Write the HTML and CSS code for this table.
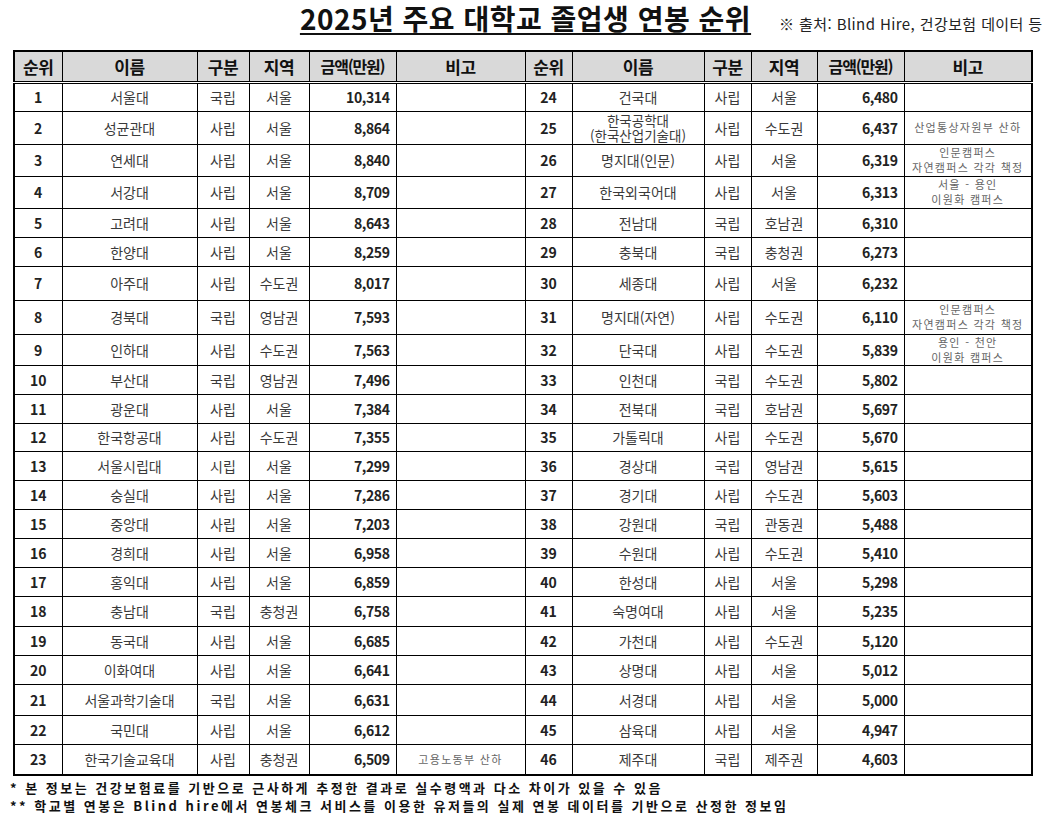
FILE: index.html
```html
<!DOCTYPE html>
<html lang="ko">
<head>
<meta charset="utf-8">
<title>2025년 주요 대학교 졸업생 연봉 순위</title>
<link rel="stylesheet" href="styles.css">
</head>
<body>
<div class="page">
  <header class="head">
    <div class="spacer"></div>
    <h1 class="title">2025년 주요 대학교 졸업생 연봉 순위</h1>
    <div class="source">※ 출처: Blind Hire, 건강보험 데이터 등</div>
  </header>

  <table class="rank-table">
    <colgroup>
      <col class="c-rank-l"><col class="c-name-l"><col class="c-type-l"><col class="c-reg-l"><col class="c-amt-l"><col class="c-note-l">
      <col class="c-rank-r"><col class="c-name-r"><col class="c-type-r"><col class="c-reg-r"><col class="c-amt-r"><col class="c-note-r">
    </colgroup>
    <thead>
      <tr>
        <th>순위</th><th>이름</th><th>구분</th><th>지역</th><th class="th-amt">금액(만원)</th><th>비고</th>
        <th>순위</th><th>이름</th><th>구분</th><th>지역</th><th class="th-amt">금액(만원)</th><th>비고</th>
      </tr>
    </thead>
    <tbody>
      <tr class="h29"><td class="rank">1</td><td>서울대</td><td>국립</td><td>서울</td><td class="amt">10,314</td><td class="note"></td>
        <td class="rank">24</td><td>건국대</td><td>사립</td><td>서울</td><td class="amt">6,480</td><td class="note"></td></tr>
      <tr class="h33"><td class="rank">2</td><td>성균관대</td><td>사립</td><td>서울</td><td class="amt">8,864</td><td class="note"></td>
        <td class="rank">25</td><td class="name2"><span class="ln">한국공학대</span><span class="ln">(한국산업기술대)</span></td><td>사립</td><td>수도권</td><td class="amt">6,437</td><td class="note">산업통상자원부 산하</td></tr>
      <tr class="h32"><td class="rank">3</td><td>연세대</td><td>사립</td><td>서울</td><td class="amt">8,840</td><td class="note"></td>
        <td class="rank">26</td><td>명지대(인문)</td><td>사립</td><td>서울</td><td class="amt">6,319</td><td class="note">인문캠퍼스<br>자연캠퍼스 각각 책정</td></tr>
      <tr class="h32"><td class="rank">4</td><td>서강대</td><td>사립</td><td>서울</td><td class="amt">8,709</td><td class="note"></td>
        <td class="rank">27</td><td>한국외국어대</td><td>사립</td><td>서울</td><td class="amt">6,313</td><td class="note">서울 - 용인<br>이원화 캠퍼스</td></tr>
      <tr class="h29"><td class="rank">5</td><td>고려대</td><td>사립</td><td>서울</td><td class="amt">8,643</td><td class="note"></td>
        <td class="rank">28</td><td>전남대</td><td>국립</td><td>호남권</td><td class="amt">6,310</td><td class="note"></td></tr>
      <tr class="h29"><td class="rank">6</td><td>한양대</td><td>사립</td><td>서울</td><td class="amt">8,259</td><td class="note"></td>
        <td class="rank">29</td><td>충북대</td><td>국립</td><td>충청권</td><td class="amt">6,273</td><td class="note"></td></tr>
      <tr class="h34"><td class="rank">7</td><td>아주대</td><td>사립</td><td>수도권</td><td class="amt">8,017</td><td class="note"></td>
        <td class="rank">30</td><td>세종대</td><td>사립</td><td>서울</td><td class="amt">6,232</td><td class="note"></td></tr>
      <tr class="h34"><td class="rank">8</td><td>경북대</td><td>국립</td><td>영남권</td><td class="amt">7,593</td><td class="note"></td>
        <td class="rank">31</td><td>명지대(자연)</td><td>사립</td><td>수도권</td><td class="amt">6,110</td><td class="note">인문캠퍼스<br>자연캠퍼스 각각 책정</td></tr>
      <tr class="h30"><td class="rank">9</td><td>인하대</td><td>사립</td><td>수도권</td><td class="amt">7,563</td><td class="note"></td>
        <td class="rank">32</td><td>단국대</td><td>사립</td><td>수도권</td><td class="amt">5,839</td><td class="note">용인 - 천안<br>이원화 캠퍼스</td></tr>
      <tr class="h29"><td class="rank">10</td><td>부산대</td><td>국립</td><td>영남권</td><td class="amt">7,496</td><td class="note"></td>
        <td class="rank">33</td><td>인천대</td><td>국립</td><td>수도권</td><td class="amt">5,802</td><td class="note"></td></tr>
      <tr class="h29"><td class="rank">11</td><td>광운대</td><td>사립</td><td>서울</td><td class="amt">7,384</td><td class="note"></td>
        <td class="rank">34</td><td>전북대</td><td>국립</td><td>호남권</td><td class="amt">5,697</td><td class="note"></td></tr>
      <tr class="h28"><td class="rank">12</td><td>한국항공대</td><td>사립</td><td>수도권</td><td class="amt">7,355</td><td class="note"></td>
        <td class="rank">35</td><td>가톨릭대</td><td>사립</td><td>수도권</td><td class="amt">5,670</td><td class="note"></td></tr>
      <tr class="h29"><td class="rank">13</td><td>서울시립대</td><td>시립</td><td>서울</td><td class="amt">7,299</td><td class="note"></td>
        <td class="rank">36</td><td>경상대</td><td>국립</td><td>영남권</td><td class="amt">5,615</td><td class="note"></td></tr>
      <tr class="h29"><td class="rank">14</td><td>숭실대</td><td>사립</td><td>서울</td><td class="amt">7,286</td><td class="note"></td>
        <td class="rank">37</td><td>경기대</td><td>사립</td><td>수도권</td><td class="amt">5,603</td><td class="note"></td></tr>
      <tr class="h29"><td class="rank">15</td><td>중앙대</td><td>사립</td><td>서울</td><td class="amt">7,203</td><td class="note"></td>
        <td class="rank">38</td><td>강원대</td><td>국립</td><td>관동권</td><td class="amt">5,488</td><td class="note"></td></tr>
      <tr class="h29"><td class="rank">16</td><td>경희대</td><td>사립</td><td>서울</td><td class="amt">6,958</td><td class="note"></td>
        <td class="rank">39</td><td>수원대</td><td>사립</td><td>수도권</td><td class="amt">5,410</td><td class="note"></td></tr>
      <tr class="h29"><td class="rank">17</td><td>홍익대</td><td>사립</td><td>서울</td><td class="amt">6,859</td><td class="note"></td>
        <td class="rank">40</td><td>한성대</td><td>사립</td><td>서울</td><td class="amt">5,298</td><td class="note"></td></tr>
      <tr class="h30"><td class="rank">18</td><td>충남대</td><td>국립</td><td>충청권</td><td class="amt">6,758</td><td class="note"></td>
        <td class="rank">41</td><td>숙명여대</td><td>사립</td><td>서울</td><td class="amt">5,235</td><td class="note"></td></tr>
      <tr class="h29"><td class="rank">19</td><td>동국대</td><td>사립</td><td>서울</td><td class="amt">6,685</td><td class="note"></td>
        <td class="rank">42</td><td>가천대</td><td>사립</td><td>수도권</td><td class="amt">5,120</td><td class="note"></td></tr>
      <tr class="h29"><td class="rank">20</td><td>이화여대</td><td>사립</td><td>서울</td><td class="amt">6,641</td><td class="note"></td>
        <td class="rank">43</td><td>상명대</td><td>사립</td><td>서울</td><td class="amt">5,012</td><td class="note"></td></tr>
      <tr class="h31"><td class="rank">21</td><td>서울과학기술대</td><td>국립</td><td>서울</td><td class="amt">6,631</td><td class="note"></td>
        <td class="rank">44</td><td>서경대</td><td>사립</td><td>서울</td><td class="amt">5,000</td><td class="note"></td></tr>
      <tr class="h29"><td class="rank">22</td><td>국민대</td><td>사립</td><td>서울</td><td class="amt">6,612</td><td class="note"></td>
        <td class="rank">45</td><td>삼육대</td><td>사립</td><td>서울</td><td class="amt">4,947</td><td class="note"></td></tr>
      <tr class="h31"><td class="rank">23</td><td>한국기술교육대</td><td>사립</td><td>충청권</td><td class="amt">6,509</td><td class="note">고용노동부 산하</td>
        <td class="rank">46</td><td>제주대</td><td>국립</td><td>제주권</td><td class="amt">4,603</td><td class="note"></td></tr>
    </tbody>
  </table>

  <div class="foot">
    <p class="f1">* 본 정보는 건강보험료를 기반으로 근사하게 추정한 결과로 실수령액과 다소 차이가 있을 수 있음</p>
    <p class="f2">** 학교별 연봉은 Blind hire에서 연봉체크 서비스를 이용한 유저들의 실제 연봉 데이터를 기반으로 산정한 정보임</p>
  </div>
</div>
</body>
</html>
```

FILE: styles.css
```css
* { box-sizing: border-box; }

body {
  margin: 0;
  background: #ffffff;
  font-family: "Noto Sans CJK KR", "Noto Sans", sans-serif;
  color: #222;
}

.page {
  width: 1051px;
}

.head {
  display: grid;
  grid-template-columns: 1fr auto 1fr;
  height: 50px;
}

.title {
  margin: 0;
  padding-top: 1px;
  font-size: 28px;
  line-height: 34px;
  font-weight: 700;
  letter-spacing: 0.5px;
  color: #111;
  text-decoration: underline;
  text-decoration-thickness: 2px;
  text-underline-offset: 3px;
}

.source {
  padding-top: 14px;
  padding-left: 28px;
  font-size: 15px;
  line-height: 20px;
  letter-spacing: 0.4px;
  white-space: nowrap;
  color: #222;
}

.rank-table {
  margin-left: 13px;
  width: 1018px;
  table-layout: fixed;
  border-collapse: collapse;
  border: 2px solid #000;
}

.c-rank-l { width: 48px; }
.c-name-l { width: 135px; }
.c-type-l { width: 52px; }
.c-reg-l  { width: 60px; }
.c-amt-l  { width: 87px; }
.c-note-l { width: 129px; }
.c-rank-r { width: 47px; }
.c-name-r { width: 132px; }
.c-type-r { width: 47px; }
.c-reg-r  { width: 66px; }
.c-amt-r  { width: 87px; }
.c-note-r { width: 128px; }

.rank-table th {
  height: 31px;
  padding: 0;
  background: #d9d9d9;
  border: 1px solid #000;
  border-bottom: 3px double #000;
  font-size: 17px;
  font-weight: 700;
  color: #111;
  letter-spacing: -0.5px;
}

.rank-table th.th-amt {
  font-size: 16px;
  letter-spacing: -1.2px;
}

.rank-table td {
  padding: 0;
  border: 1px solid #000;
  text-align: center;
  font-size: 14px;
  color: #3a3a3a;
  white-space: nowrap;
}

.h28 { height: 28px; }
.h29 { height: 29px; }
.h30 { height: 30px; }
.h31 { height: 31px; }
.h32 { height: 32px; }
.h33 { height: 33px; }
.h34 { height: 34px; }

.rank-table td.rank {
  font-weight: 700;
  color: #222;
}

.rank-table td.amt {
  text-align: right;
  padding-right: 6px;
  font-weight: 700;
  color: #222;
  letter-spacing: -0.4px;
}

.rank-table td.name2 {
  font-size: 13.5px;
  line-height: 15px;
}

.name2 .ln {
  display: block;
  height: 15px;
}

.rank-table td.note {
  font-size: 11px;
  line-height: 15px;
  letter-spacing: 1.3px;
  color: #666;
}

.foot {
  padding: 3px 0 0 10px;
}

.foot p {
  margin: 0;
  font-size: 13px;
  line-height: 18px;
  font-weight: 700;
  letter-spacing: 2.5px;
  color: #111;
}
```
